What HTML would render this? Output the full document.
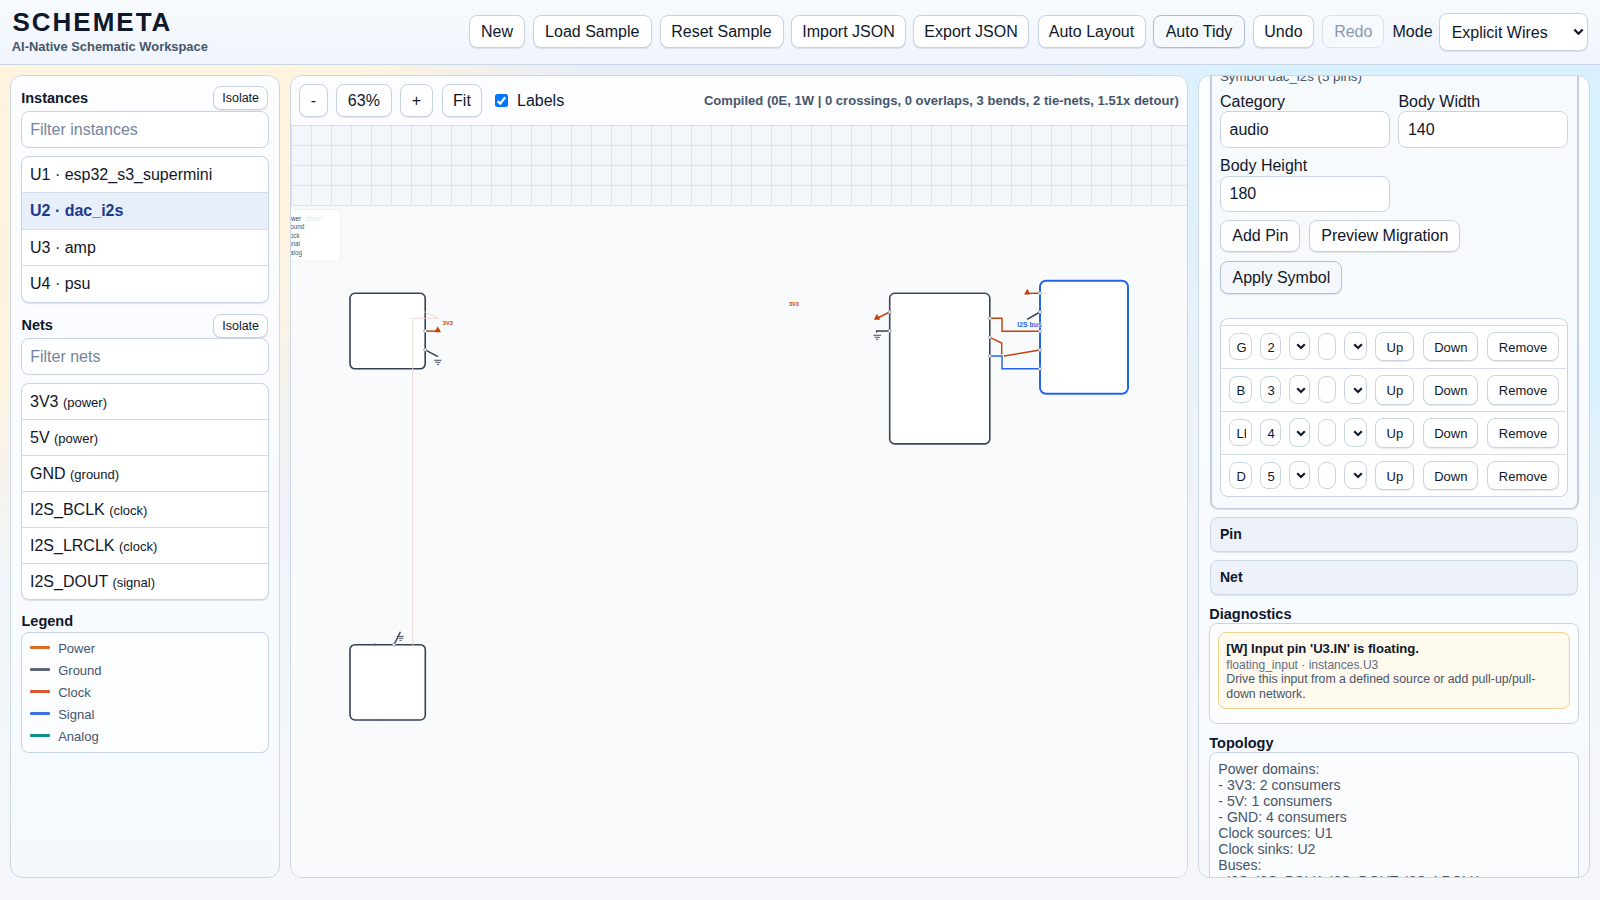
<!DOCTYPE html>
<html><head><meta charset="utf-8"><title>Schemeta</title>
<style>
*{box-sizing:border-box;margin:0;padding:0}
html,body{width:1600px;height:900px;overflow:hidden}
body{font-family:"Liberation Sans",sans-serif;color:#0f172a;position:relative;
background:radial-gradient(circle at 0 0,#fef3df 0,#fef3df 370px,rgba(254,243,223,0) 580px),radial-gradient(circle at 100% 0,#d9f1fe 0,#d9f1fe 370px,rgba(217,241,254,0) 580px),linear-gradient(180deg,#e8eef8 0,#f5f7fa 900px);}
.a{position:absolute}
header{position:absolute;left:0;top:0;width:1600px;height:65px;background:linear-gradient(180deg,#f7fbfe 0,#f0f5fd 62px,#f5f9fe 63px);border-bottom:1px solid #c9d6e6}
.t1{position:absolute;left:12.4px;top:6px;font-size:26px;font-weight:bold;letter-spacing:2.0px;line-height:32px;color:#0f172a;white-space:nowrap}
.t2{position:absolute;left:11.8px;top:39px;font-size:12.9px;font-weight:bold;color:#475569;line-height:15px;white-space:nowrap}
.btn{position:absolute;border:1px solid #c6d2e1;border-radius:8px;background:#fff;text-align:center;color:#0f172a;box-shadow:0 1px 1px rgba(15,23,42,.10);white-space:nowrap;overflow:hidden}
.hb{top:15.2px;height:32.8px;font-size:16px;line-height:32.5px}
.panel{position:absolute;top:75px;height:803px;border:1px solid #cdd8e6;border-radius:12px;background:linear-gradient(180deg,#fcfdff 0,#f5f9fe 100%);overflow:hidden}
.h3{position:absolute;font-size:14.5px;font-weight:bold;color:#0f172a;line-height:17px;white-space:nowrap}
.inp{position:absolute;background:#fff;border:1px solid #c8d4e3;border-radius:8px;font-size:16px;white-space:nowrap;overflow:hidden}
.ph{color:#74849c}
.list{position:absolute;background:#fff;border:1px solid #c8d4e3;border-radius:8px;overflow:hidden;box-shadow:0 1px 1px rgba(15,23,42,.10)}
.row{position:absolute;left:0;right:0;border-top:1px solid #d3dce8;font-size:16px;padding-left:8px;white-space:nowrap;color:#0f172a}
.row small{font-size:13px}
.sel{background:#e7effb;color:#1e3a8a;font-weight:bold}
.lg{position:absolute;left:8px;width:20px;height:3px;border-radius:1px}
.lt{position:absolute;left:36.2px;font-size:13px;color:#475569;line-height:15px;margin-top:-0.3px}
.lab{position:absolute;font-size:16px;line-height:1;color:#0f172a;white-space:nowrap}
.prow{position:absolute;left:0;width:345px;height:43.1px;border-top:1px solid #d3dce8}
.pi{position:absolute;top:7.3px;height:26.8px;border:1px solid #c8d4e3;border-radius:8px;background:#fff;font-size:13px;line-height:27.2px;padding-left:6.3px;padding-right:5px;white-space:nowrap;color:#0f172a}
.pi span{display:block;overflow:hidden}
.ps{position:absolute;top:6px;height:28.5px;border:1px solid #c8d4e3;border-radius:8px;background:#fff}
.ps svg{position:absolute;right:2.8px;top:10.6px}
.pb{position:absolute;top:5.8px;height:29.7px;border:1px solid #c8d4e3;border-radius:8px;background:#fff;font-size:13px;line-height:29.4px;text-align:center;color:#0f172a;box-shadow:0 1px 1px rgba(15,23,42,.10)}
.sum{position:absolute;left:11px;width:368px;border:1px solid #cfd9e6;border-radius:8px;background:#edf2fa;box-shadow:0 1px 1px rgba(15,23,42,.10)}
.sum b{position:absolute;left:9px;font-size:14px;line-height:1;color:#0f172a}
</style></head>
<body>
<header>
  <div class="t1">SCHEMETA</div>
  <div class="t2">AI-Native Schematic Workspace</div>
  <div class="btn hb" style="left:469px;width:56px">New</div>
  <div class="btn hb" style="left:533px;width:118.5px">Load Sample</div>
  <div class="btn hb" style="left:659.5px;width:124px">Reset Sample</div>
  <div class="btn hb" style="left:791.2px;width:114.6px">Import JSON</div>
  <div class="btn hb" style="left:913.3px;width:115.5px">Export JSON</div>
  <div class="btn hb" style="left:1037.5px;width:108px">Auto Layout</div>
  <div class="btn hb" style="left:1153.1px;width:91.8px;background:#f6f9fe;border-color:#aebdd0">Auto Tidy</div>
  <div class="btn hb" style="left:1252.7px;width:61.5px">Undo</div>
  <div class="btn hb" style="left:1322.2px;width:62.2px;background:#f6f9fd;border-color:#dbe3ee;color:#8b9ab0;box-shadow:none">Redo</div>
  <div class="a" style="left:1392.5px;top:23px;font-size:16px;line-height:18px">Mode</div>
  <div class="btn" style="left:1438.7px;top:13px;width:149.5px;height:37.5px;font-size:16px;line-height:37.5px;text-align:left;padding-left:12px">Explicit Wires
    <svg class="a" style="left:133.8px;top:14px" width="11" height="8" viewBox="0 0 11 8"><path d="M1.3 1.5 L5.5 5.7 L9.7 1.5" fill="none" stroke="#0f172a" stroke-width="2.2"/></svg></div>
</header>

<!-- LEFT PANEL -->
<div class="panel" style="left:10px;width:270px">
  <div class="h3" style="left:10.2px;top:13.7px">Instances</div>
  <div class="btn" style="left:201.8px;top:10px;width:55.7px;height:24px;font-size:12.5px;line-height:22px;border-radius:8px">Isolate</div>
  <div class="inp" style="left:10px;top:35px;width:248px;height:36.5px;line-height:36.9px;padding-left:8.2px"><span class="ph">Filter instances</span></div>
  <div class="list" style="left:10px;top:80px;width:248px;height:146.5px">
    <div class="row" style="top:0;height:35px;line-height:35px;border-top:0">U1 · esp32_s3_supermini</div>
    <div class="row sel" style="top:35px;height:37px;line-height:36px">U2 · dac_i2s</div>
    <div class="row" style="top:72px;height:36px;line-height:35px">U3 · amp</div>
    <div class="row" style="top:108px;height:37px;line-height:36px">U4 · psu</div>
  </div>
  <div class="h3" style="left:10.5px;top:241px">Nets</div>
  <div class="btn" style="left:201.8px;top:238px;width:55.7px;height:24px;font-size:12.5px;line-height:22px">Isolate</div>
  <div class="inp" style="left:10px;top:262px;width:248px;height:36.5px;line-height:36.9px;padding-left:8.2px"><span class="ph">Filter nets</span></div>
  <div class="list" style="left:10px;top:307px;width:248px;height:217px">
    <div class="row" style="top:0;height:35px;line-height:35px;border-top:0">3V3 <small>(power)</small></div>
    <div class="row" style="top:35px;height:36px;line-height:35px">5V <small>(power)</small></div>
    <div class="row" style="top:71px;height:36px;line-height:35px">GND <small>(ground)</small></div>
    <div class="row" style="top:107px;height:36px;line-height:35px">I2S_BCLK <small>(clock)</small></div>
    <div class="row" style="top:143px;height:36px;line-height:35px">I2S_LRCLK <small>(clock)</small></div>
    <div class="row" style="top:179px;height:37px;line-height:35px">I2S_DOUT <small>(signal)</small></div>
  </div>
  <div class="h3" style="left:10.5px;top:536.5px">Legend</div>
  <div class="list" style="left:10px;top:555.5px;width:247.7px;height:121px;box-shadow:none;background:#fcfdff">
    <div class="lg" style="top:13px;background:#dd6b20"></div><div class="lt" style="top:8.5px">Power</div>
    <div class="lg" style="top:35px;background:#5b6675"></div><div class="lt" style="top:30.5px">Ground</div>
    <div class="lg" style="top:57px;background:#d65a2e"></div><div class="lt" style="top:52.5px">Clock</div>
    <div class="lg" style="top:79px;background:#3b73e3"></div><div class="lt" style="top:74.5px">Signal</div>
    <div class="lg" style="top:101px;background:#0f8f80"></div><div class="lt" style="top:96.5px">Analog</div>
  </div>
</div>

<!-- CANVAS PANEL -->
<div class="panel" style="left:290px;width:898px">
  <div class="btn" style="left:8px;top:8px;width:29px;height:32.5px;font-size:16px;line-height:32px">-</div>
  <div class="btn" style="left:45.2px;top:8px;width:55.4px;height:32.5px;font-size:16px;line-height:32px">63%</div>
  <div class="btn" style="left:109.4px;top:8px;width:32.2px;height:32.5px;font-size:16px;line-height:32px">+</div>
  <div class="btn" style="left:150.6px;top:8px;width:40.8px;height:32.5px;font-size:16px;line-height:32px">Fit</div>
  <div class="a" style="left:204px;top:18px;width:13px;height:13px;border-radius:2.5px;background:#0075ff"><svg class="a" style="left:0;top:0" width="13" height="13" viewBox="0 0 13 13"><path d="M2.6 7.1 L5.3 9.6 L10.2 3.3" fill="none" stroke="#fff" stroke-width="2.2"/></svg></div>
  <div class="a" style="left:226px;top:15.7px;font-size:16px;line-height:18px;color:#0f172a">Labels</div>
  <div class="a" style="left:412.9px;top:17px;font-size:13.06px;font-weight:bold;line-height:16px;color:#475569;white-space:nowrap">Compiled (0E, 1W | 0 crossings, 0 overlaps, 3 bends, 2 tie-nets, 1.51x detour)</div>
  <div class="a" style="left:0;top:49px;width:898px;height:1px;background:#d3dde9"></div>
  <div class="a" style="left:0;top:50px;width:898px;height:80px;background-color:#f3f6fb;background-image:linear-gradient(90deg,#dae4ef 1px,transparent 1px),linear-gradient(180deg,transparent 19px,#dae4ef 19px);background-size:20px 20px;background-position:20px 0,0 0"></div>
  <div class="a" style="left:0;top:130px;width:898px;height:672px;background:#f8fafc"></div>
  <svg class="a" style="left:-1px;top:-1px" width="898" height="802" viewBox="290 75 898 802">
    <g font-family="Liberation Sans">
    <rect x="284" y="209.5" width="57" height="51.5" rx="4" fill="#fff" stroke="#e8ecf2" stroke-width="0.8"/>
    <text x="283.3" y="220.5" font-size="6.3" fill="#3b4656">Power</text>
    <text x="304.7" y="221" font-size="7.6" fill="#e3e7ed">chain</text>
    <text x="283.3" y="229.3" font-size="6.3" fill="#475569">Ground</text>
    <text x="283.9" y="237.9" font-size="6.3" fill="#475569">Clock</text>
    <text x="282.5" y="246.4" font-size="6.3" fill="#475569">Signal</text>
    <text x="282.4" y="255.3" font-size="6.3" fill="#475569">Analog</text>
    </g>
    <!-- U1 -->
    <rect x="350" y="293.3" width="75.2" height="75.5" rx="5" fill="#fff" stroke="#334155" stroke-width="1.6"/>
    <path d="M425.2 331.1 H436" stroke="#c2410c" stroke-width="1.45" fill="none"/>
    <path d="M437.8 326.3 L441 332.3 L434.6 332.3 Z" fill="#c2410c"/>
    <text x="442.8" y="325" font-family="Liberation Sans" font-size="5.6" font-weight="bold" fill="#c2410c">3V3</text>
    <path d="M425.2 349.8 L437.9 356.6" stroke="#334155" stroke-width="1.45" fill="none"/>
    <path d="M434.2 360.3 H441.5 M435.4 362.3 H440.4 M436.8 364.4 H439.1" stroke="#334155" stroke-width="0.9" fill="none"/>
    <!-- U4 -->
    <rect x="350" y="644.7" width="75.3" height="75.3" rx="5" fill="#fff" stroke="#334155" stroke-width="1.6"/>
    <path d="M394 644.7 L400.4 631.8" stroke="#334155" stroke-width="1.45" fill="none"/>
    <path d="M396.9 636.4 H403.8 M398.9 638.3 H403 M399.5 640.4 H401.5" stroke="#334155" stroke-width="0.9" fill="none"/>
    <!-- U2 -->
    <rect x="889.7" y="293.3" width="100.1" height="150.6" rx="5" fill="#fff" stroke="#3b4757" stroke-width="1.6"/>
    <path d="M889.7 312 L877.7 318" stroke="#c2410c" stroke-width="1.45" fill="none"/>
    <path d="M877 313.8 L880.2 319.8 L873.8 319.8 Z" fill="#c2410c"/>
    <path d="M889.7 331 H876.7 V332.5" stroke="#334155" stroke-width="1.45" fill="none"/>
    <path d="M873.3 335.3 H881 M874.7 337.3 H879.7 M876 339.3 H878.3" stroke="#334155" stroke-width="0.9" fill="none"/>
    <text x="789" y="305.8" font-family="Liberation Sans" font-size="5.6" font-weight="bold" fill="#c2410c">3V3</text>
    <!-- U3 -->
    <rect x="1040" y="280.8" width="88" height="112.9" rx="6" fill="#fff" stroke="#fff" stroke-width="4"/>
    <rect x="1040" y="280.8" width="88" height="112.9" rx="6" fill="#fff" stroke="#2563eb" stroke-width="2"/>
    <path d="M1040 293.3 H1030" stroke="#c2410c" stroke-width="1.45" fill="none"/>
    <path d="M1027.3 288.8 L1030.5 294.6 L1024.1 294.6 Z" fill="#c2410c"/>
    <path d="M1040 312 L1027.1 319.3" stroke="#334155" stroke-width="1.45" fill="none"/>
    <!-- wires -->
    <path d="M989.8 318.3 H1002 V331.3 H1040" stroke="#c2410c" stroke-width="1.45" fill="none"/>
    <path d="M989.8 337.3 L1001.7 343 V354.3 M1004 356 L1040 350" stroke="#c2410c" stroke-width="1.45" fill="none"/>
    <path d="M989.8 356 H1002 V368.7 H1040" stroke="#2563eb" stroke-width="1.45" fill="none"/>
    <text x="1017.3" y="326.8" font-family="Liberation Sans" font-size="6.9" font-weight="bold" fill="#2563eb" stroke="#fff" stroke-width="0.8" paint-order="stroke">I2S bus</text>
    <!-- ghost tie wires -->
    <g fill="none" stroke="#ecd6cf" stroke-width="0.9">
      <path d="M412.7 644.7 V318.3 H438.5 L424.3 311.7"/>
    </g>
    <g fill="#6b7686" stroke="none" opacity="0.55"><circle cx="375.1" cy="644.7" r="1.6"/><circle cx="381.3" cy="720" r="1.6"/></g>
    <g fill="#b99a92" stroke="none" opacity="0.6"><circle cx="412.9" cy="644.7" r="1.5"/></g>
    <!-- pin dots -->
    <g fill="#fff" stroke="#7f8b9c" stroke-width="0.8">
      <circle cx="425.2" cy="331.1" r="1.5"/><circle cx="425.2" cy="349.8" r="1.5"/>
      <circle cx="394" cy="644.7" r="1.5"/>
      <circle cx="889.7" cy="312" r="1.5"/><circle cx="889.7" cy="331" r="1.5"/>
      <circle cx="989.8" cy="318.3" r="1.5"/><circle cx="989.8" cy="337.3" r="1.5"/><circle cx="989.8" cy="356" r="1.5"/>
      <circle cx="1040" cy="293.3" r="1.5"/><circle cx="1040" cy="312" r="1.5"/><circle cx="1040" cy="331.3" r="1.5"/><circle cx="1040" cy="350" r="1.5"/><circle cx="1040" cy="368.7" r="1.5"/>
    </g>
  </svg>
</div>

<!-- RIGHT PANEL -->
<div class="panel" style="left:1198px;width:392px">
  <div class="a" style="left:10.7px;top:-220px;width:369.3px;height:653px;border:1px solid #bfcbdc;border-left:2px solid #c3cede;border-right:2px solid #c3cede;border-radius:8px;background:rgba(246,249,253,.9);box-shadow:0 1px 1px rgba(15,23,42,.12)"></div>
  <div class="a" style="left:21px;top:-5.6px;font-size:13.3px;line-height:1;color:#475569;white-space:nowrap">Symbol dac_i2s (5 pins)</div>
  <div class="lab" style="left:21px;top:18px">Category</div>
  <div class="lab" style="left:199.4px;top:18px">Body Width</div>
  <div class="inp" style="left:21px;top:35px;width:170.2px;height:36.5px;line-height:35px;padding-left:8.5px">audio</div>
  <div class="inp" style="left:199.4px;top:35px;width:169.3px;height:36.5px;line-height:35px;padding-left:8.5px">140</div>
  <div class="lab" style="left:21px;top:82px">Body Height</div>
  <div class="inp" style="left:21px;top:99.5px;width:170.2px;height:36px;line-height:34.3px;padding-left:8.5px">180</div>
  <div class="btn" style="left:21.3px;top:144px;width:80px;height:32.3px;font-size:16px;line-height:30.5px">Add Pin</div>
  <div class="btn" style="left:110.4px;top:144px;width:150.8px;height:32.3px;font-size:16px;line-height:30.5px">Preview Migration</div>
  <div class="btn" style="left:21.3px;top:185px;width:122.2px;height:32.6px;font-size:16px;line-height:31.8px;background:#f4f7fc;border-color:#b3c2d5">Apply Symbol</div>
  <div class="a" style="left:21.3px;top:242px;width:347.7px;height:179.3px;border:1px solid #c8d4e3;border-radius:8px;background:#fff;overflow:hidden">
    <div class="prow" style="top:-37.2px">
      <div class="pi" style="left:7.9px;width:22.4px"><span>VCC</span></div>
      <div class="pi" style="left:38.9px;width:20.4px">1</div>
      <div class="ps" style="left:67.8px;width:21px"><svg width="10" height="7" viewBox="0 0 10 7"><path d="M1.2 1.2 L5 5 L8.8 1.2" fill="none" stroke="#0f172a" stroke-width="2.1"/></svg></div>
      <div class="pi" style="left:96.9px;width:17.6px"></div>
      <div class="ps" style="left:122.7px;width:22.8px"><svg width="10" height="7" viewBox="0 0 10 7"><path d="M1.2 1.2 L5 5 L8.8 1.2" fill="none" stroke="#0f172a" stroke-width="2.1"/></svg></div>
      <div class="pb" style="left:154.1px;width:38.9px">Up</div>
      <div class="pb" style="left:202px;width:55px">Down</div>
      <div class="pb" style="left:265.9px;width:71.6px">Remove</div>
    </div>
    <div class="prow" style="top:5.9px">
      <div class="pi" style="left:7.9px;width:22.4px"><span>GND</span></div>
      <div class="pi" style="left:38.9px;width:20.4px">2</div>
      <div class="ps" style="left:67.8px;width:21px"><svg width="10" height="7" viewBox="0 0 10 7"><path d="M1.2 1.2 L5 5 L8.8 1.2" fill="none" stroke="#0f172a" stroke-width="2.1"/></svg></div>
      <div class="pi" style="left:96.9px;width:17.6px"></div>
      <div class="ps" style="left:122.7px;width:22.8px"><svg width="10" height="7" viewBox="0 0 10 7"><path d="M1.2 1.2 L5 5 L8.8 1.2" fill="none" stroke="#0f172a" stroke-width="2.1"/></svg></div>
      <div class="pb" style="left:154.1px;width:38.9px">Up</div>
      <div class="pb" style="left:202px;width:55px">Down</div>
      <div class="pb" style="left:265.9px;width:71.6px">Remove</div>
    </div>
    <div class="prow" style="top:49.1px">
      <div class="pi" style="left:7.9px;width:22.4px"><span>BCLK</span></div>
      <div class="pi" style="left:38.9px;width:20.4px">3</div>
      <div class="ps" style="left:67.8px;width:21px"><svg width="10" height="7" viewBox="0 0 10 7"><path d="M1.2 1.2 L5 5 L8.8 1.2" fill="none" stroke="#0f172a" stroke-width="2.1"/></svg></div>
      <div class="pi" style="left:96.9px;width:17.6px"></div>
      <div class="ps" style="left:122.7px;width:22.8px"><svg width="10" height="7" viewBox="0 0 10 7"><path d="M1.2 1.2 L5 5 L8.8 1.2" fill="none" stroke="#0f172a" stroke-width="2.1"/></svg></div>
      <div class="pb" style="left:154.1px;width:38.9px">Up</div>
      <div class="pb" style="left:202px;width:55px">Down</div>
      <div class="pb" style="left:265.9px;width:71.6px">Remove</div>
    </div>
    <div class="prow" style="top:92.2px">
      <div class="pi" style="left:7.9px;width:22.4px"><span>LRCLK</span></div>
      <div class="pi" style="left:38.9px;width:20.4px">4</div>
      <div class="ps" style="left:67.8px;width:21px"><svg width="10" height="7" viewBox="0 0 10 7"><path d="M1.2 1.2 L5 5 L8.8 1.2" fill="none" stroke="#0f172a" stroke-width="2.1"/></svg></div>
      <div class="pi" style="left:96.9px;width:17.6px"></div>
      <div class="ps" style="left:122.7px;width:22.8px"><svg width="10" height="7" viewBox="0 0 10 7"><path d="M1.2 1.2 L5 5 L8.8 1.2" fill="none" stroke="#0f172a" stroke-width="2.1"/></svg></div>
      <div class="pb" style="left:154.1px;width:38.9px">Up</div>
      <div class="pb" style="left:202px;width:55px">Down</div>
      <div class="pb" style="left:265.9px;width:71.6px">Remove</div>
    </div>
    <div class="prow" style="top:134.8px">
      <div class="pi" style="left:7.9px;width:22.4px"><span>DOUT</span></div>
      <div class="pi" style="left:38.9px;width:20.4px">5</div>
      <div class="ps" style="left:67.8px;width:21px"><svg width="10" height="7" viewBox="0 0 10 7"><path d="M1.2 1.2 L5 5 L8.8 1.2" fill="none" stroke="#0f172a" stroke-width="2.1"/></svg></div>
      <div class="pi" style="left:96.9px;width:17.6px"></div>
      <div class="ps" style="left:122.7px;width:22.8px"><svg width="10" height="7" viewBox="0 0 10 7"><path d="M1.2 1.2 L5 5 L8.8 1.2" fill="none" stroke="#0f172a" stroke-width="2.1"/></svg></div>
      <div class="pb" style="left:154.1px;width:38.9px">Up</div>
      <div class="pb" style="left:202px;width:55px">Down</div>
      <div class="pb" style="left:265.9px;width:71.6px">Remove</div>
    </div>
  </div>
  <div class="sum" style="top:441px;height:34.5px"><b style="top:9px">Pin</b></div>
  <div class="sum" style="top:484.3px;height:34.5px"><b style="top:9px">Net</b></div>
  <div class="h3" style="left:10.3px;top:529.5px">Diagnostics</div>
  <div class="a" style="left:10.3px;top:547.3px;width:369.7px;height:100.8px;border:1px solid #c8d4e3;border-radius:8px;background:#fcfdff"></div>
  <div class="a" style="left:19.3px;top:556.3px;width:351.7px;height:76.4px;border:1px solid #f0d08a;border-radius:8px;background:#fff9ee"></div>
  <div class="a" style="left:27.3px;top:565.8px;font-size:13.12px;font-weight:bold;line-height:1;color:#0f172a;white-space:nowrap">[W] Input pin 'U3.IN' is floating.</div>
  <div class="a" style="left:27.3px;top:582.6px;font-size:12.05px;line-height:1;color:#5f6f84;white-space:nowrap">floating_input · instances.U3</div>
  <div class="a" style="left:27.3px;top:596.1px;width:340px;font-size:12.3px;line-height:14.6px;color:#475569">Drive this input from a defined source or add pull-up/pull-<br>down network.</div>
  <div class="h3" style="left:10.3px;top:659px">Topology</div>
  <div class="a" style="left:10.2px;top:675.9px;width:369.8px;height:300px;border:1px solid #c8d4e3;border-radius:8px;background:#fbfcfe"></div>
  <div class="a" style="left:19.3px;top:685.1px;font-size:14.1px;line-height:16px;color:#475569;white-space:pre">Power domains:
- 3V3: 2 consumers
- 5V: 1 consumers
- GND: 4 consumers
Clock sources: U1
Clock sinks: U2
Buses:
- I2S: I2S_BCLK, I2S_DOUT, I2S_LRCLK</div>
</div>
</body></html>
